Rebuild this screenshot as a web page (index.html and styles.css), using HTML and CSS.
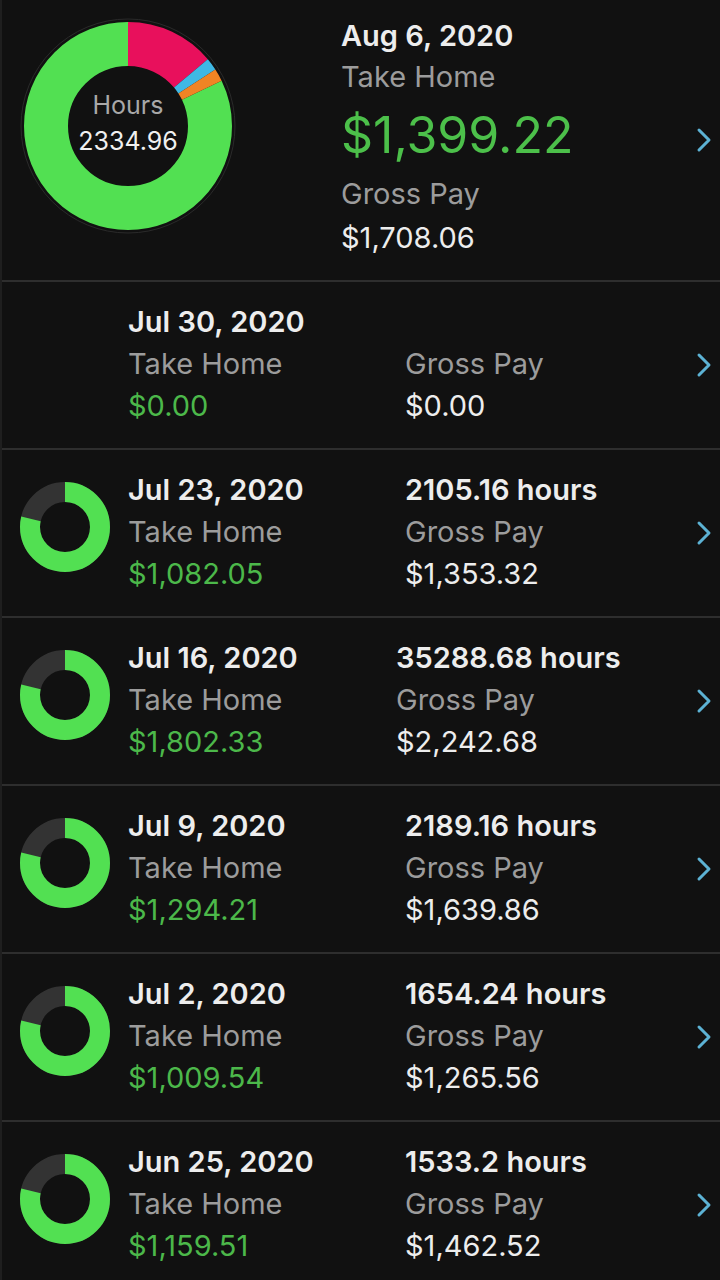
FILE: index.html
```html
<!DOCTYPE html>
<html>
<head>
<meta charset="utf-8">
<link rel="stylesheet" href="styles.css">
</head>
<body>
<div class="app">
  <section class="summary">
    <div class="big-chart">
      <svg width="216" height="216" viewBox="0 0 216 216">
        <circle cx="108" cy="108" r="107" fill="none" stroke="#2a2a2a" stroke-width="1"/>
        <g transform="rotate(-90 108 108)">
          <circle cx="108" cy="108" r="82" fill="none" stroke="#52e052" stroke-width="44" stroke-dasharray="423.6 515.2" stroke-dashoffset="-91.6"/>
          <circle cx="108" cy="108" r="82" fill="none" stroke="#e8105c" stroke-width="44" stroke-dasharray="71.6 515.2" stroke-dashoffset="0"/>
          <circle cx="108" cy="108" r="82" fill="none" stroke="#3fb8e4" stroke-width="44" stroke-dasharray="10 515.2" stroke-dashoffset="-71.6"/>
          <circle cx="108" cy="108" r="82" fill="none" stroke="#f08424" stroke-width="44" stroke-dasharray="10 515.2" stroke-dashoffset="-81.6"/>
        </g>
      </svg>
      <div class="big-label">
        <div class="hours-label">Hours</div>
        <div class="hours-value">2334.96</div>
      </div>
    </div>
    <div class="summary-text">
      <div class="date">Aug 6, 2020</div>
      <div class="label lh41">Take Home</div>
      <div class="big-amount">$1,399.22</div>
      <div class="label lh40">Gross Pay</div>
      <div class="gross lh48">$1,708.06</div>
    </div>
    <svg class="chev" width="16" height="26" viewBox="0 0 16 26"><polyline points="3,3 13,13 3,23" fill="none" stroke="#5cb2d4" stroke-width="3" stroke-linecap="round" stroke-linejoin="round"/></svg>
  </section>

  <section class="row">
    <div class="icon"></div>
    <div class="col left">
      <div class="date">Jul 30, 2020</div>
      <div class="label">Take Home</div>
      <div class="amount">$0.00</div>
    </div>
    <div class="col right">
      <div class="date">&nbsp;</div>
      <div class="label">Gross Pay</div>
      <div class="value">$0.00</div>
    </div>
    <svg class="chev" width="16" height="26" viewBox="0 0 16 26"><polyline points="3,3 13,13 3,23" fill="none" stroke="#5cb2d4" stroke-width="3" stroke-linecap="round" stroke-linejoin="round"/></svg>
  </section>

  <section class="row">
    <div class="icon"><svg width="90" height="90" viewBox="0 0 90 90"><g transform="rotate(-90 45 45)"><circle cx="45" cy="45" r="35" fill="none" stroke="#333333" stroke-width="20"/><circle cx="45" cy="45" r="35" fill="none" stroke="#52e052" stroke-width="20" stroke-dasharray="172.9 219.9"/></g></svg></div>
    <div class="col left">
      <div class="date">Jul 23, 2020</div>
      <div class="label">Take Home</div>
      <div class="amount">$1,082.05</div>
    </div>
    <div class="col right">
      <div class="date">2105.16 hours</div>
      <div class="label">Gross Pay</div>
      <div class="value">$1,353.32</div>
    </div>
    <svg class="chev" width="16" height="26" viewBox="0 0 16 26"><polyline points="3,3 13,13 3,23" fill="none" stroke="#5cb2d4" stroke-width="3" stroke-linecap="round" stroke-linejoin="round"/></svg>
  </section>

  <section class="row">
    <div class="icon"><svg width="90" height="90" viewBox="0 0 90 90"><g transform="rotate(-90 45 45)"><circle cx="45" cy="45" r="35" fill="none" stroke="#333333" stroke-width="20"/><circle cx="45" cy="45" r="35" fill="none" stroke="#52e052" stroke-width="20" stroke-dasharray="172.9 219.9"/></g></svg></div>
    <div class="col left narrow">
      <div class="date">Jul 16, 2020</div>
      <div class="label">Take Home</div>
      <div class="amount">$1,802.33</div>
    </div>
    <div class="col right">
      <div class="date">35288.68 hours</div>
      <div class="label">Gross Pay</div>
      <div class="value">$2,242.68</div>
    </div>
    <svg class="chev" width="16" height="26" viewBox="0 0 16 26"><polyline points="3,3 13,13 3,23" fill="none" stroke="#5cb2d4" stroke-width="3" stroke-linecap="round" stroke-linejoin="round"/></svg>
  </section>

  <section class="row">
    <div class="icon"><svg width="90" height="90" viewBox="0 0 90 90"><g transform="rotate(-90 45 45)"><circle cx="45" cy="45" r="35" fill="none" stroke="#333333" stroke-width="20"/><circle cx="45" cy="45" r="35" fill="none" stroke="#52e052" stroke-width="20" stroke-dasharray="172.9 219.9"/></g></svg></div>
    <div class="col left">
      <div class="date">Jul 9, 2020</div>
      <div class="label">Take Home</div>
      <div class="amount">$1,294.21</div>
    </div>
    <div class="col right">
      <div class="date">2189.16 hours</div>
      <div class="label">Gross Pay</div>
      <div class="value">$1,639.86</div>
    </div>
    <svg class="chev" width="16" height="26" viewBox="0 0 16 26"><polyline points="3,3 13,13 3,23" fill="none" stroke="#5cb2d4" stroke-width="3" stroke-linecap="round" stroke-linejoin="round"/></svg>
  </section>

  <section class="row">
    <div class="icon"><svg width="90" height="90" viewBox="0 0 90 90"><g transform="rotate(-90 45 45)"><circle cx="45" cy="45" r="35" fill="none" stroke="#333333" stroke-width="20"/><circle cx="45" cy="45" r="35" fill="none" stroke="#52e052" stroke-width="20" stroke-dasharray="172.9 219.9"/></g></svg></div>
    <div class="col left">
      <div class="date">Jul 2, 2020</div>
      <div class="label">Take Home</div>
      <div class="amount">$1,009.54</div>
    </div>
    <div class="col right">
      <div class="date">1654.24 hours</div>
      <div class="label">Gross Pay</div>
      <div class="value">$1,265.56</div>
    </div>
    <svg class="chev" width="16" height="26" viewBox="0 0 16 26"><polyline points="3,3 13,13 3,23" fill="none" stroke="#5cb2d4" stroke-width="3" stroke-linecap="round" stroke-linejoin="round"/></svg>
  </section>

  <section class="row last">
    <div class="icon"><svg width="90" height="90" viewBox="0 0 90 90"><g transform="rotate(-90 45 45)"><circle cx="45" cy="45" r="35" fill="none" stroke="#333333" stroke-width="20"/><circle cx="45" cy="45" r="35" fill="none" stroke="#52e052" stroke-width="20" stroke-dasharray="172.9 219.9"/></g></svg></div>
    <div class="col left">
      <div class="date">Jun 25, 2020</div>
      <div class="label">Take Home</div>
      <div class="amount">$1,159.51</div>
    </div>
    <div class="col right">
      <div class="date">1533.2 hours</div>
      <div class="label">Gross Pay</div>
      <div class="value">$1,462.52</div>
    </div>
    <svg class="chev" width="16" height="26" viewBox="0 0 16 26"><polyline points="3,3 13,13 3,23" fill="none" stroke="#5cb2d4" stroke-width="3" stroke-linecap="round" stroke-linejoin="round"/></svg>
  </section>
</div>
</body>
</html>
```
FILE: styles.css
```css
html, body {
  margin: 0;
  padding: 0;
  background: #111111;
}
body {
  font-family: Inter, Lato, sans-serif;
  color: #ececec;
  width: 720px;
  height: 1280px;
  overflow: hidden;
}
.app {
  border-left: 2px solid #1f1f1f;
  min-height: 1280px;
}
.summary {
  display: flex;
  height: 280px;
  border-bottom: 2px solid #2e2e2e;
  position: relative;
}
.big-chart {
  position: relative;
  width: 216px;
  height: 216px;
  margin: 18px 0 0 18px;
}
.big-chart svg {
  display: block;
}
.big-label {
  position: absolute;
  inset: 0;
  display: flex;
  flex-direction: column;
  align-items: center;
  justify-content: center;
  font-size: 25px;
  line-height: 36px;
  padding-bottom: 6px;
  box-sizing: border-box;
}
.hours-label {
  color: #a8a8a8;
}
.hours-value {
  color: #f0f0f0;
}
.summary-text {
  margin-left: 105px;
  padding-top: 15px;
  font-size: 29px;
}
.date {
  font-weight: 600;
  color: #ededed;
  line-height: 41px;
  white-space: nowrap;
}
.label {
  color: #9c9c9c;
  line-height: 42px;
  white-space: nowrap;
}
.lh41 { line-height: 41px; }
.lh40 { line-height: 40px; }
.lh48 { line-height: 48px; }
.big-amount {
  color: #4cc04a;
  font-size: 50px;
  line-height: 77px;
  white-space: nowrap;
}
.gross {
  color: #ededed;
}
.chev {
  margin-left: auto;
  margin-right: 8px;
  align-self: center;
  flex: none;
}
.row {
  display: flex;
  height: 166px;
  border-bottom: 2px solid #2e2e2e;
  font-size: 29px;
}
.row.last {
  border-bottom: none;
}
.icon {
  width: 126px;
  flex: none;
  padding: 32px 0 0 18px;
  box-sizing: border-box;
}
.icon svg {
  display: block;
}
.col {
  padding-top: 19px;
}
.col .date {
  line-height: 42px;
}
.left {
  width: 277px;
  flex: none;
}
.left.narrow {
  width: 268px;
}
.amount {
  color: #4cb84a;
  line-height: 42px;
  white-space: nowrap;
}
.value {
  color: #ededed;
  line-height: 42px;
  white-space: nowrap;
}
```
